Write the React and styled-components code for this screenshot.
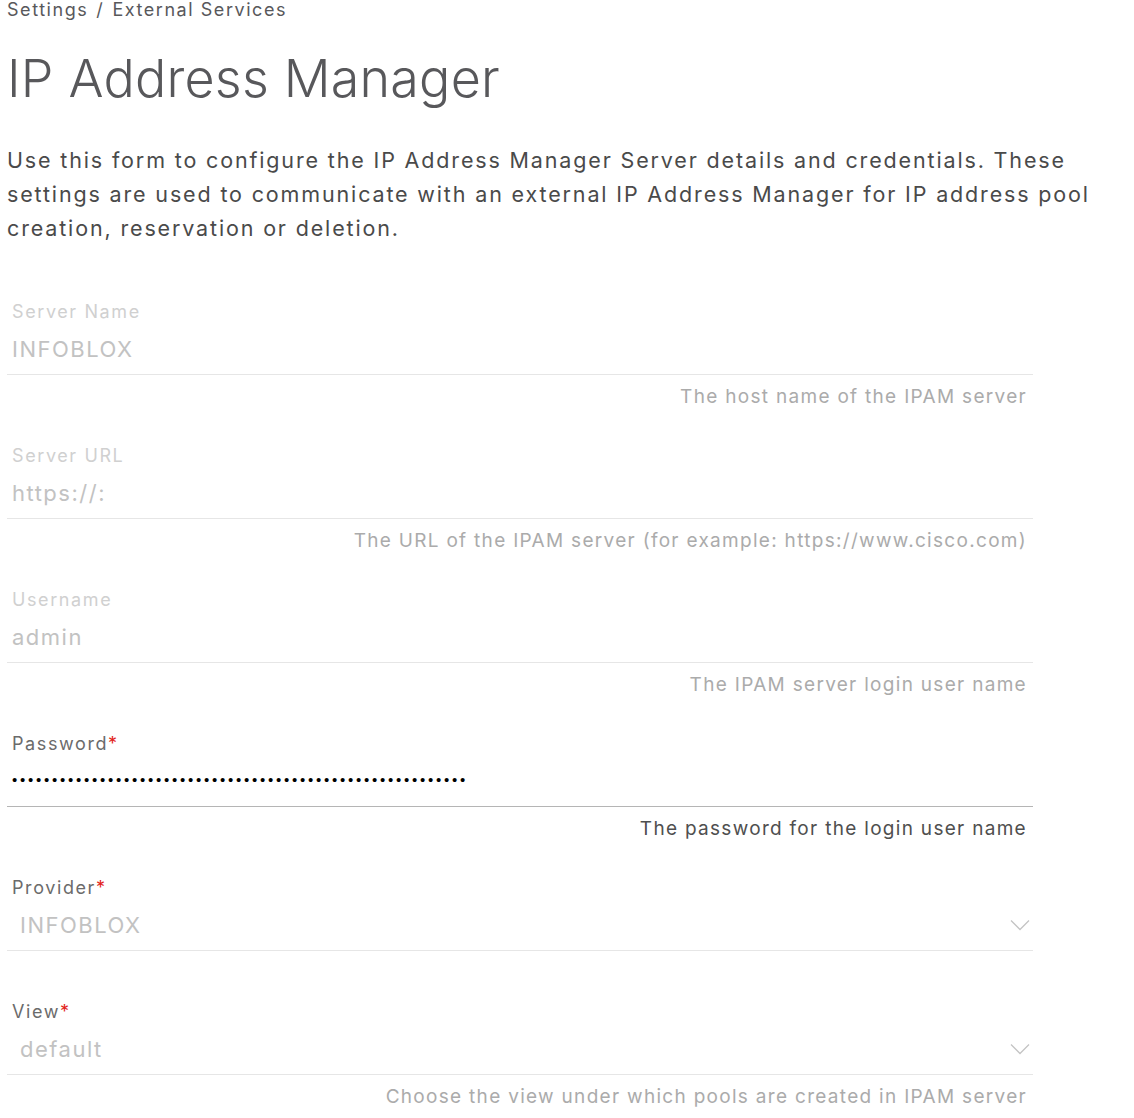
import React from "react";
import styled, { createGlobalStyle } from "styled-components";

const GlobalStyle = createGlobalStyle`
  html, body {
    margin: 0;
    padding: 0;
    background: #ffffff;
  }
  body {
    font-family: Inter, "Noto Sans", "Liberation Sans", sans-serif;
    color: #58585b;
  }
`;

const Page = styled("div")`
  padding: 0 7px;
  width: 1120px;
  box-sizing: border-box;
`;

const Breadcrumb = styled("div")`
  font-size: 18px;
  line-height: 20px;
  letter-spacing: 1.55px;
  color: #58585b;

  span {
    margin: 0 8px;
  }
`;

const Title = styled("h1")`
  margin: 29px 0 0;
  font-size: 52px;
  line-height: 60px;
  font-weight: 300;
  letter-spacing: 0.2px;
  color: #58585b;
`;

const Description = styled("p")`
  margin: 34px 0 0;
  max-width: 1105px;
  font-size: 21.5px;
  line-height: 34px;
  letter-spacing: 1.85px;
  color: #4a4a4a;
`;

const Form = styled("form")`
  margin-top: 55px;
  width: 1026px;
`;

const Field = styled("div")`
  padding-bottom: 35px;
`;

const Label = styled("label")`
  display: block;
  padding-left: 5px;
  font-size: 18px;
  line-height: 24px;
  letter-spacing: 1.6px;
  color: ${({ $disabled }) => ($disabled ? "#d0d0d0" : "#6b6b6b")};
`;

const Required = styled("span")`
  color: #e2231a;
`;

const Control = styled("div")`
  position: relative;
  height: 50px;
  display: flex;
  align-items: center;
  border-bottom: 1px solid ${({ $active }) => ($active ? "#b5b5b5" : "#e6e6e6")};
`;

const Input = styled("input")`
  width: 100%;
  height: 100%;
  border: 0;
  outline: none;
  background: transparent;
  padding: 0 0 0 5px;
  font-family: inherit;
  font-size: 22px;
  letter-spacing: 1.5px;
  color: #c2c2c2;

  &:disabled {
    color: #c2c2c2;
    -webkit-text-fill-color: #c2c2c2;
  }
`;

const PasswordInput = styled(Input)`
  font-family: "Liberation Sans", sans-serif;
  font-size: 15px;
  letter-spacing: 2.75px;
  color: #000;
  padding-bottom: 4px;
`;

const SelectValue = styled("div")`
  flex: 1;
  padding-left: 13px;
  font-size: 22px;
  letter-spacing: 1.5px;
  color: #c2c2c2;
`;

const Chevron = styled("svg")`
  width: 20px;
  height: 12px;
  margin-right: 3px;
`;

const Help = styled("div")`
  margin-top: 10px;
  text-align: right;
  padding-right: 6px;
  font-size: 19px;
  line-height: 24px;
  letter-spacing: 1.3px;
  color: ${({ $disabled }) => ($disabled ? "#ababab" : "#4f4f4f")};
`;

const Spacer = styled("div")`
  height: 14px;
`;

const fields = [
  {
    label: "Server Name",
    value: "INFOBLOX",
    help: "The host name of the IPAM server",
  },
  {
    label: "Server URL",
    value: "https://:",
    help: "The URL of the IPAM server (for example: https://www.cisco.com)",
  },
  {
    label: "Username",
    value: "admin",
    help: "The IPAM server login user name",
  },
];

const ChevronDown = () => (
  <Chevron viewBox="0 0 20 12" fill="none">
    <path d="M1 1.5L10 10.5L19 1.5" stroke="#c4c4c4" strokeWidth="1.3" />
  </Chevron>
);

export default function App() {
  return (
    <Page>
      <GlobalStyle />
      <Breadcrumb>
        Settings<span>/</span>External Services
      </Breadcrumb>
      <Title>IP Address Manager</Title>
      <Description>
        Use this form to configure the IP Address Manager Server details and
        credentials. These settings are used to communicate with an external IP
        Address Manager for IP address pool creation, reservation or deletion.
      </Description>
      <Form onSubmit={(e) => e.preventDefault()}>
        {fields.map((f) => (
          <Field key={f.label}>
            <Label $disabled>{f.label}</Label>
            <Control>
              <Input disabled defaultValue={f.value} />
            </Control>
            <Help $disabled>{f.help}</Help>
          </Field>
        ))}

        <Field>
          <Label>
            Password<Required>*</Required>
          </Label>
          <Control $active>
            <PasswordInput type="password" readOnly defaultValue={"x".repeat(57)} />
          </Control>
          <Help>The password for the login user name</Help>
        </Field>

        <Field>
          <Label>
            Provider<Required>*</Required>
          </Label>
          <Control>
            <SelectValue>INFOBLOX</SelectValue>
            <ChevronDown />
          </Control>
          <Spacer />
        </Field>

        <Field>
          <Label>
            View<Required>*</Required>
          </Label>
          <Control>
            <SelectValue>default</SelectValue>
            <ChevronDown />
          </Control>
          <Help $disabled>Choose the view under which pools are created in IPAM server</Help>
        </Field>
      </Form>
    </Page>
  );
}
